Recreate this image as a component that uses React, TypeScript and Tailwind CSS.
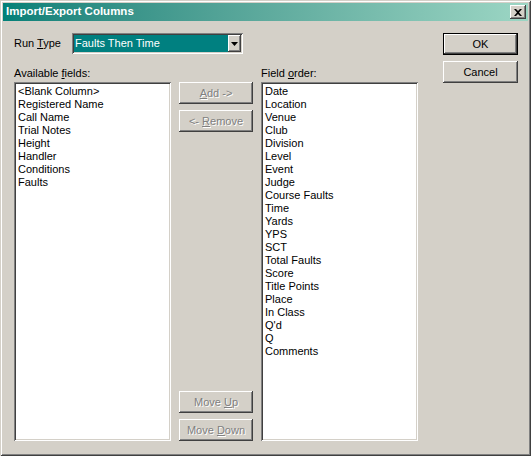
const raised =
  "shadow-[inset_-1px_-1px_#404040,inset_1px_1px_#ffffff,inset_-2px_-2px_#808080,inset_2px_2px_#d4d0c8]";
const sunken =
  "shadow-[inset_1px_1px_#808080,inset_-1px_-1px_#ffffff,inset_2px_2px_#404040,inset_-2px_-2px_#d4d0c8]";

const available = [
  "<Blank Column>",
  "Registered Name",
  "Call Name",
  "Trial Notes",
  "Height",
  "Handler",
  "Conditions",
  "Faults",
];

const order = [
  "Date",
  "Location",
  "Venue",
  "Club",
  "Division",
  "Level",
  "Event",
  "Judge",
  "Course Faults",
  "Time",
  "Yards",
  "YPS",
  "SCT",
  "Total Faults",
  "Score",
  "Title Points",
  "Place",
  "In Class",
  "Q'd",
  "Q",
  "Comments",
];

function Btn({
  children,
  disabled,
  isDefault,
}: {
  children: React.ReactNode;
  disabled?: boolean;
  isDefault?: boolean;
}) {
  const face = (
    <div
      className={`flex h-full w-full items-center justify-center bg-[#d4d0c8] ${raised} ${
        disabled ? "text-[#808080] [text-shadow:1px_1px_0_#ffffff]" : "text-black"
      }`}
    >
      {children}
    </div>
  );
  if (isDefault) {
    return <div className="h-[22px] w-[75px] border border-black">{face}</div>;
  }
  return <div className="h-[22px] w-full">{face}</div>;
}

function ListBox({ items }: { items: string[] }) {
  return (
    <div className={`flex-1 bg-white p-[2px] ${sunken}`}>
      <div className="pl-[2px] pt-[1px]">
        {items.map((it) => (
          <div key={it} className="h-[13px] whitespace-nowrap leading-[13px] text-black">
            {it}
          </div>
        ))}
      </div>
    </div>
  );
}

export default function App() {
  return (
    <div className="h-[456px] w-[531px] bg-[#d4d0c8] font-['Liberation_Sans',Arial,sans-serif] text-[11px] text-black">
      <div
        className={`flex h-full w-full flex-col p-[3px] shadow-[inset_1px_1px_#d4d0c8,inset_-1px_-1px_#404040,inset_2px_2px_#ffffff,inset_-2px_-2px_#808080]`}
      >
        {/* title bar */}
        <div className="flex h-[18px] items-center justify-between bg-gradient-to-r from-[#008078] to-[#9cd6c4] pl-[3px] pr-[2px]">
          <span className="text-[11.5px] font-bold text-white">Import/Export Columns</span>
          <div className={`flex h-[14px] w-[16px] items-center justify-center bg-[#d4d0c8] ${raised}`}>
            <svg width="8" height="7" viewBox="0 0 8 7" className="mr-[1px]">
              <path d="M0 0h2l2 2 2-2h2L5 3.5 8 7H6L4 5 2 7H0l3-3.5z" fill="#000" />
            </svg>
          </div>
        </div>

        {/* body */}
        <div className="flex flex-1 pb-[12px] pl-[11px] pr-[10px] pt-[12px]">
          <div className="flex w-[404px] flex-col">
            <div className="flex h-[21px] items-center">
              <span className="w-[58px]">
                Run <span className="underline">T</span>ype
              </span>
              <div className={`flex h-[21px] w-[171px] bg-white p-[2px] ${sunken}`}>
                <div className="flex flex-1 items-center bg-[#008080] pl-[1px] text-white">Faults Then Time</div>
                <div className={`flex w-[13px] items-center justify-center bg-[#d4d0c8] ${raised}`}>
                  <svg width="7" height="4" viewBox="0 0 7 4">
                    <path d="M0 0h7L3.5 4z" fill="#000" />
                  </svg>
                </div>
              </div>
            </div>

            <div className="mt-[13px] flex flex-1 gap-[8px]">
              <div className="flex w-[157px] flex-col">
                <div className="mb-[2px] h-[13px] leading-[13px]">
                  Available <span className="underline">f</span>ields:
                </div>
                <ListBox items={available} />
              </div>

              <div className="flex w-[74px] flex-col gap-[6px] pt-[15px]">
                <Btn disabled>
                  <span>
                    <span className="underline">A</span>dd -&gt;
                  </span>
                </Btn>
                <Btn disabled>
                  <span>
                    &lt;- <span className="underline">R</span>emove
                  </span>
                </Btn>
                <div className="flex-1" />
                <Btn disabled>
                  <span>
                    Move <span className="underline">U</span>p
                  </span>
                </Btn>
                <Btn disabled>
                  <span>
                    Move <span className="underline">D</span>own
                  </span>
                </Btn>
              </div>

              <div className="flex w-[157px] flex-col">
                <div className="mb-[2px] h-[13px] leading-[13px]">
                  Field <span className="underline">o</span>rder:
                </div>
                <ListBox items={order} />
              </div>
            </div>
          </div>

          <div className="ml-[25px] flex w-[75px] flex-col gap-[6px]">
            <Btn isDefault>OK</Btn>
            <Btn>Cancel</Btn>
          </div>
        </div>
      </div>
    </div>
  );
}
